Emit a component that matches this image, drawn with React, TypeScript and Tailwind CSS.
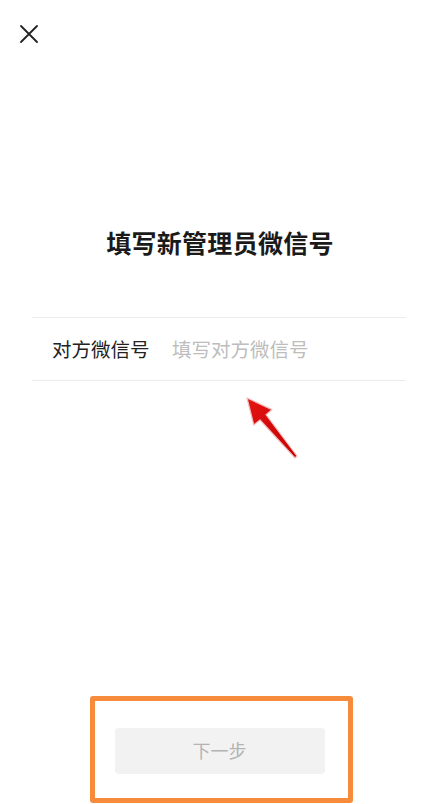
import React from 'react';

const font = '"Noto Sans CJK SC", "Noto Sans", sans-serif';

function CloseIcon() {
  return (
    <svg width="20" height="20" viewBox="0 0 20 20" fill="none">
      <path d="M2 2 L18 18 M18 2 L2 18" stroke="#222" strokeWidth="1.8" strokeLinecap="round" />
    </svg>
  );
}

// annotation arrow drawn over the page
function RedArrow() {
  return (
    <svg width="70" height="80" viewBox="0 0 70 80" className="absolute left-[238px] top-[390px]">
      <defs>
        <linearGradient id="ar" x1="0" y1="0" x2="1" y2="1">
          <stop offset="0" stopColor="#e41414" />
          <stop offset="1" stopColor="#c20000" />
        </linearGradient>
      </defs>
      <path
        d="M9 8 L34 19.6 L28 24.7 L59 66 L57 68 L22 29.9 L15.8 35 Z"
        fill="url(#ar)"
        stroke="#f2bcbc"
        strokeWidth="1.2"
        strokeLinejoin="round"
      />
    </svg>
  );
}

export default function App() {
  return (
    <div className="relative w-[440px] h-[804px] bg-white flex flex-col" style={{ fontFamily: font }}>
      <div className="pl-[19px] pt-[24px] h-[60px]">
        <CloseIcon />
      </div>
      <h1 className="mt-[165px] text-center text-[25px] font-bold text-[#1a1a1a] leading-[34px] tracking-[0.3px]">
        填写新管理员微信号
      </h1>
      <div className="ml-[32px] mr-[34px] mt-[58px] border-t border-b border-[#ececec] h-[64px] flex items-center pl-[20px]">
        <span className="text-[19.5px] text-[#222] w-[120px]">对方微信号</span>
        <span className="text-[19.5px] text-[#bdbdbd]">填写对方微信号</span>
      </div>
      <RedArrow />
      <div className="flex-1" />
      <div className="ml-[90px] mb-[1px] w-[263px] h-[107px] border-[5px] border-[#f68b3c] rounded-[3px] flex items-center justify-center">
        <button className="w-[210px] h-[46px] rounded-[4px] bg-[#f2f2f2] text-[18px] text-[#b3b3b3] mt-[2px] mr-[4px]">
          下一步
        </button>
      </div>
    </div>
  );
}
